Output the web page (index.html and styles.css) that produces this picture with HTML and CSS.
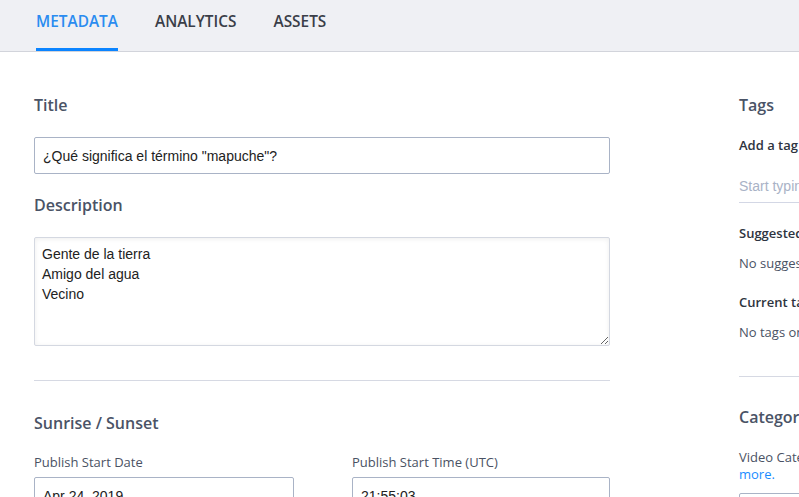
FILE: index.html
```html
<!DOCTYPE html>
<html lang="es">
<head>
<meta charset="utf-8">
<title>Metadata</title>
<link rel="stylesheet" href="styles.css">
</head>
<body>
<nav class="tabs">
  <a class="tab active">Metadata</a>
  <a class="tab">Analytics</a>
  <a class="tab">Assets</a>
</nav>
<main class="page">
  <section class="col-left">
    <h2 class="heading">Title</h2>
    <input class="text-input title-input" type="text" value="¿Qué significa el término &quot;mapuche&quot;?">
    <h2 class="heading heading-desc">Description</h2>
    <textarea class="textarea" id="desc">Gente de la tierra
Amigo del agua
Vecino</textarea>
    <hr class="rule rule-left">
    <h2 class="heading heading-sun">Sunrise / Sunset</h2>
    <div class="pair">
      <div class="field">
        <label class="label">Publish Start Date</label>
        <input class="text-input small-input" type="text" value="Apr 24, 2019">
      </div>
      <div class="field">
        <label class="label">Publish Start Time (UTC)</label>
        <input class="text-input small-input" type="text" value="21:55:03">
      </div>
    </div>
  </section>
  <aside class="col-right">
    <h2 class="heading">Tags</h2>
    <div class="sub sub-first">Add a tag</div>
    <input class="tag-input" type="text" placeholder="Start typing to add a tag">
    <div class="sub sub-sugg">Suggested tags</div>
    <div class="note">No suggestions available</div>
    <div class="sub sub-curr">Current tags</div>
    <div class="note">No tags on this video</div>
    <hr class="rule rule-right">
    <h2 class="heading">Categories</h2>
    <p class="cat-text">Video Categories help viewers find your content. <a class="link">Learn</a><br><a class="link">more.</a></p>
    <div class="cat-box"></div>
  </aside>
</main>
<script src="script.js"></script>
</body>
</html>
```
FILE: styles.css
```css
* { box-sizing: border-box; }
html, body { margin: 0; padding: 0; }
body {
  width: 799px;
  height: 497px;
  overflow: hidden;
  background: #ffffff;
  font-family: "Open Sans", "Liberation Sans", sans-serif;
  color: #4a5264;
}
.tabs {
  display: flex;
  gap: 37px;
  height: 52px;
  padding-left: 36px;
  background: #eff0f4;
  border-bottom: 1px solid #d2d4db;
}
.tab {
  height: 51px;
  padding-top: 11px;
  font-size: 15.4px;
  line-height: 22px;
  font-weight: 600;
  text-transform: uppercase;
  color: #3a3e48;
  border-bottom: 3px solid transparent;
}
.tab.active {
  color: #2a8cf0;
  border-bottom-color: #0b84ff;
}
.page {
  display: flex;
  padding: 42px 0 0 34px;
  width: 1300px;
}
.col-left {
  flex: 0 0 576px;
  display: flex;
  flex-direction: column;
}
.col-right {
  flex: 0 0 420px;
  margin-left: 129px;
  display: flex;
  flex-direction: column;
}
.heading {
  margin: 0;
  font-size: 16px;
  line-height: 22px;
  font-weight: 600;
  color: #4a5366;
}
.text-input {
  display: block;
  font-family: "Liberation Sans", Arial, sans-serif;
  font-size: 14px;
  color: #222;
  background: #fff;
  border: 1px solid #a9b3c6;
  border-radius: 2px;
  padding: 0 8px;
  outline: none;
}
.title-input {
  width: 576px;
  height: 37px;
  margin-top: 21px;
}
.heading-desc { margin-top: 20px; }
.textarea {
  display: block;
  width: 576px;
  height: 109px;
  margin: 21px 0 0;
  padding: 6px 7px;
  font-family: "Liberation Sans", Arial, sans-serif;
  font-size: 14px;
  line-height: 20px;
  color: #222;
  caret-color: #000;
  border: 1px solid #d4d8e1;
  border-radius: 2px;
  box-shadow: inset 0 1px 5px rgba(0, 0, 0, 0.07);
  outline: none;
}
.rule {
  margin: 0;
  border: 0;
  height: 1px;
  background: #d6d9e3;
}
.rule-left { margin-top: 34px; width: 576px; }
.heading-sun { margin-top: 31px; }
.pair {
  display: flex;
  gap: 58px;
  margin-top: 19px;
}
.field { display: flex; flex-direction: column; }
.label {
  font-size: 13px;
  line-height: 18px;
  color: #4a5264;
}
.small-input {
  width: 260px;
  height: 37px;
  margin-top: 6px;
}
.field + .field .small-input { width: 258px; }
.sub {
  font-size: 13px;
  line-height: 18px;
  font-weight: 600;
  color: #2e3440;
}
.sub-first { margin-top: 20px; }
.tag-input {
  display: block;
  width: 300px;
  height: 33px;
  margin-top: 16px;
  padding: 0;
  border: 0;
  border-bottom: 1px solid #d3d7e5;
  font-family: "Liberation Sans", Arial, sans-serif;
  font-size: 14px;
  color: #222;
  outline: none;
}
.tag-input::placeholder { color: #a9b2c6; }
.sub-sugg { margin-top: 21px; }
.sub-curr { margin-top: 21px; }
.note {
  margin-top: 12px;
  font-size: 13px;
  line-height: 18px;
  color: #4a5264;
}
.rule-right { margin-top: 35px; margin-bottom: 29px; width: 300px; }
.cat-text {
  margin: 21px 0 0;
  font-size: 13px;
  line-height: 17px;
  color: #4a5264;
}
.link { color: #1a8cff; }
.cat-box {
  margin-top: 10px;
  width: 300px;
  height: 37px;
  border: 1px solid #a9b3c6;
  border-radius: 2px;
}
```
FILE: script.js
```js
var d = document.getElementById('desc');
if (d) {
  d.focus();
  d.setSelectionRange(d.value.length, d.value.length);
}
```
